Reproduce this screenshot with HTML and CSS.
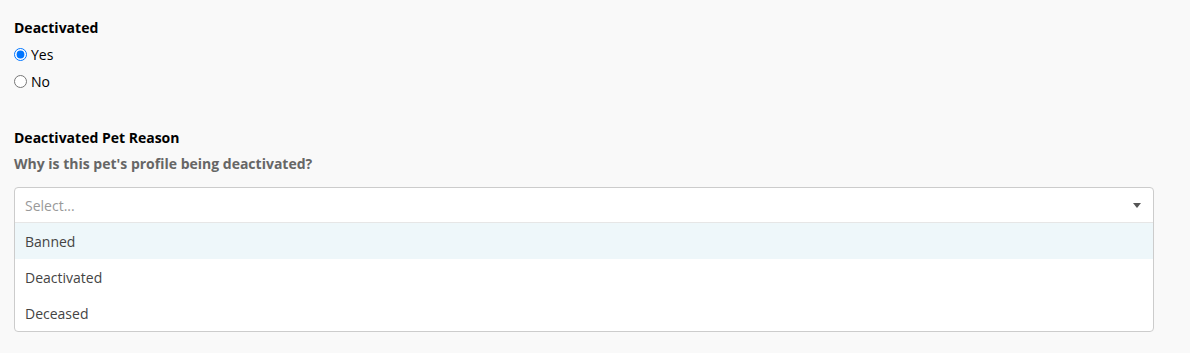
FILE: index.html
```html
<!DOCTYPE html>
<html>
<head>
<meta charset="utf-8">
<link rel="stylesheet" href="styles.css">
</head>
<body>
<div class="page">
  <div class="field">
    <div class="label">Deactivated</div>
    <label class="radio"><input type="radio" name="deact" checked><span>Yes</span></label>
    <label class="radio"><input type="radio" name="deact"><span>No</span></label>
  </div>
  <div class="field reason">
    <div class="label">Deactivated Pet Reason</div>
    <div class="help">Why is this pet's profile being deactivated?</div>
    <div class="select">
      <div class="control">
        <span class="placeholder">Select...</span>
        <span class="arrow"></span>
      </div>
      <div class="menu">
        <div class="option focused">Banned</div>
        <div class="option">Deactivated</div>
        <div class="option">Deceased</div>
      </div>
    </div>
  </div>
</div>
</body>
</html>
```
FILE: styles.css
```css
html, body {
  margin: 0;
  padding: 0;
  background: #f9f9f9;
}
body {
  font-family: "Open Sans", "Liberation Sans", sans-serif;
  font-size: 14px;
  color: #000;
}
.page {
  padding: 18px 36px 0 14px;
}
.label {
  font-weight: 700;
  font-size: 14px;
  line-height: 19px;
  margin-bottom: 7px;
}
.radio {
  display: flex;
  align-items: center;
  height: 27px;
  margin-top: -3px;
  margin-bottom: 3px;
}
.radio input {
  margin: 0 4px 0 0;
  width: 13px;
  height: 13px;
}
.radio span {
  font-size: 14px;
}
.reason {
  margin-top: 33px;
}
.reason .label {
  margin-bottom: 7px;
}
.help {
  font-weight: 700;
  color: #666;
  font-size: 14px;
  line-height: 19px;
  margin-bottom: 14px;
}
.select {
  width: 1140px;
  background: #fff;
  border: 1px solid #ccc;
  border-radius: 4px;
  box-sizing: border-box;
  overflow: hidden;
}
.control {
  height: 34px;
  display: flex;
  align-items: center;
  justify-content: space-between;
  padding: 0 12px 0 10px;
  border-bottom: 1px solid #e6e6e6;
}
.placeholder {
  color: #999;
}
.arrow {
  width: 0;
  height: 0;
  margin-top: 1px;
  border-left: 4px solid transparent;
  border-right: 4px solid transparent;
  border-top: 5px solid #555;
}
.option {
  height: 36px;
  display: flex;
  align-items: center;
  padding: 0 10px;
  color: #444;
}
.option.focused {
  background: #eef7fa;
}
```
